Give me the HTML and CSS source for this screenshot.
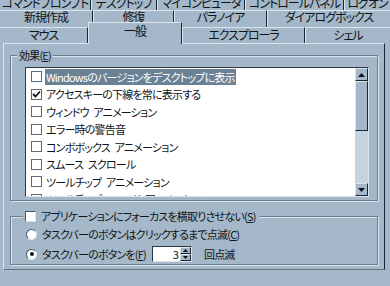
FILE: index.html
```html
<!DOCTYPE html>
<html lang="ja">
<head>
  <meta charset="UTF-8">
  <meta name="viewport" content="width=device-width, initial-scale=1.0">
  <title>Tweak UI</title>
  <link rel="stylesheet" href="styles.css">
</head>
<body>
  <div class="tabs">
    <div class="tabrow row1">
      <div class="tab w-cmd"><span>コマンドプロンプト</span></div>
      <div class="tab w-desk"><span>デスクトップ</span></div>
      <div class="tab w-mycom"><span>マイコンピュータ</span></div>
      <div class="tab w-ctrl"><span>コントロールパネル</span></div>
      <div class="tab fill"><span>ログオン</span></div>
    </div>
    <div class="tabrow row2">
      <div class="tab w-new">新規作成</div>
      <div class="tab w-repair">修復</div>
      <div class="tab w-para">パラノイア</div>
      <div class="tab fill">ダイアログボックス</div>
    </div>
    <div class="tabrow row3">
      <div class="tab w-mouse">マウス</div>
      <div class="tab w-general active">一般</div>
      <div class="tab w-explorer">エクスプローラ</div>
      <div class="tab fill">シェル</div>
    </div>
  </div>

  <div class="panel">
    <fieldset class="group effects">
      <legend>効果(<u>E</u>)</legend>
      <div class="listbox">
        <ul class="items">
          <li><span class="check"></span><span class="label selected">Windowsのバージョンをデスクトップに表示</span></li>
          <li><span class="check"><svg width="9" height="9" viewBox="0 0 9 9"><path d="M1 4 L3.5 6.5 L8 1.5" fill="none" stroke="#101418" stroke-width="1.8"/></svg></span><span class="label">アクセスキーの下線を常に表示する</span></li>
          <li><span class="check"></span><span class="label">ウィンドウ アニメーション</span></li>
          <li><span class="check"></span><span class="label">エラー時の警告音</span></li>
          <li><span class="check"></span><span class="label">コンボボックス アニメーション</span></li>
          <li><span class="check"></span><span class="label">スムース スクロール</span></li>
          <li><span class="check"></span><span class="label">ツールチップ アニメーション</span></li>
          <li><span class="check"></span><span class="label">ツールチップ フェード アニメーション</span></li>
        </ul>
        <div class="scrollbar">
          <div class="sb-btn"><svg width="7" height="4" viewBox="0 0 7 4"><path d="M3.5 0 L7 4 L0 4 Z" fill="#101418"/></svg></div>
          <div class="sb-thumb"></div>
          <div class="sb-track"></div>
          <div class="sb-btn"><svg width="7" height="4" viewBox="0 0 7 4"><path d="M0 0 L7 0 L3.5 4 Z" fill="#101418"/></svg></div>
        </div>
      </div>
    </fieldset>

    <fieldset class="group taskbar">
      <legend><span class="box"></span>アプリケーションにフォーカスを横取りさせない(<u>S</u>)</legend>
      <div class="option">
        <span class="radio"></span>
        <span>タスクバーのボタンはクリックするまで点滅(<u>C</u>)</span>
      </div>
      <div class="option">
        <span class="radio on"></span>
        <span>タスクバーのボタンを(<u>F</u>)</span>
        <div class="spin">
          <div class="spin-field">3</div>
          <div class="spin-btns">
            <div class="spin-btn"><svg width="5" height="3" viewBox="0 0 5 3"><path d="M2.5 0 L5 3 L0 3 Z" fill="#101418"/></svg></div>
            <div class="spin-btn"><svg width="5" height="3" viewBox="0 0 5 3"><path d="M0 0 L5 0 L2.5 3 Z" fill="#101418"/></svg></div>
          </div>
        </div>
        <span class="after">回点滅</span>
      </div>
    </fieldset>
  </div>
</body>
</html>
```

FILE: styles.css
```css
body {
  margin: 0;
  background: #a4b8c9;
  color: #101418;
  font-family: "Noto Sans CJK JP", "Liberation Sans", sans-serif;
  font-size: 11px;
  letter-spacing: -0.8px;
  word-spacing: 3px;
  font-feature-settings: "palt";
  overflow: hidden;
}

u {
  text-decoration-thickness: 1px;
  text-underline-offset: 1px;
}

/* tab rows */
.tabrow {
  display: flex;
  white-space: nowrap;
}

.tab {
  box-sizing: border-box;
  border-top: 1px solid #dae5ee;
  border-left: 1px solid #dae5ee;
  border-right: 1px solid #1c2630;
  text-align: center;
  line-height: 12px;
  font-size: 12px;
  letter-spacing: -1px;
  overflow: hidden;
}

.tab.fill {
  flex: 1;
  border-right: none;
}

.row1 {
  height: 10px;
  overflow: hidden;
}

.row1 .tab {
  display: flex;
  align-items: flex-end;
  justify-content: center;
  border-top: none;
  height: 10px;
  padding-bottom: 1px;
}

.row1 .tab span {
  line-height: 13px;
  flex: none;
}

.row2 .tab {
  height: 17px;
  padding-top: 0;
}

.row3 {
  height: 16px;
}

.row3 .tab {
  height: 16px;
  padding-top: 1px;
}

.row3 .tab.active {
  position: relative;
  z-index: 1;
  height: 22px;
  margin-top: -5px;
  padding-top: 2px;
  background: #a4b8c9;
}

.w-cmd { width: 91px; border-left: none; }
.w-desk { width: 66px; }
.w-mycom { width: 88px; }
.w-ctrl { width: 99px; }
.w-new { width: 93px; border-left: none; }
.w-repair { width: 81px; }
.w-para { width: 93px; }
.w-mouse { width: 88px; border-left: none; }
.w-general { width: 94px; }
.w-explorer { width: 123px; }

/* page panel */
.panel {
  box-sizing: border-box;
  width: 382px;
  height: 227px;
  margin-left: 3px;
  padding: 0 6px;
  border-top: 1px solid #dae5ee;
  border-left: 1px solid #dae5ee;
  border-right: 1px solid #1c2630;
  border-bottom: 1px solid #5e7282;
}

.group {
  margin: 0;
  border: 1px solid #6a7e8e;
  box-shadow: inset 1px 1px 0 #dae5ee, 1px 1px 0 #dae5ee;
  min-inline-size: 0;
}

.group legend {
  background: #a4b8c9;
  line-height: 14px;
  padding: 0 2px;
}

.effects {
  width: 368px;
  box-sizing: border-box;
  margin-top: 4px;
  padding: 5px 8px 3px 6px;
}

.listbox {
  display: flex;
  height: 128px;
  margin-left: 8px;
  background: #ffffff;
  border-top: 1px solid #2a3640;
  border-left: 1px solid #2a3640;
  border-right: 1px solid #dae5ee;
  border-bottom: 1px solid #dae5ee;
  overflow: hidden;
}

.items {
  flex: 1;
  list-style: none;
  margin: 0;
  padding: 0;
  overflow: hidden;
}

.items li {
  display: flex;
  align-items: center;
  height: 17.5px;
  padding-left: 5px;
  white-space: nowrap;
}

.check {
  box-sizing: border-box;
  width: 11px;
  height: 11px;
  margin-right: 3px;
  border: 1px solid #5a6a78;
  background: #ffffff;
  display: flex;
  align-items: center;
  justify-content: center;
}

.label {
  line-height: 16px;
  padding: 0 1px;
}

.label.selected {
  background: #6b8296;
  color: #ffffff;
}

.scrollbar {
  display: flex;
  flex-direction: column;
  width: 13px;
  background: #c6d4df;
}

.sb-btn,
.sb-thumb {
  box-sizing: border-box;
  background: #a4b8c9;
  border-top: 1px solid #dae5ee;
  border-left: 1px solid #dae5ee;
  border-right: 1px solid #1c2630;
  border-bottom: 1px solid #1c2630;
}

.sb-btn {
  height: 13px;
  display: flex;
  align-items: center;
  justify-content: center;
}

.sb-thumb {
  height: 50px;
}

.sb-track {
  flex: 1;
}

/* lower group */
.taskbar {
  width: 368px;
  box-sizing: border-box;
  margin-top: 8px;
  height: 56px;
  padding: 1px 8px 0 15px;
}

.taskbar legend {
  display: flex;
  align-items: center;
  margin-left: -3px;
  padding: 0 3px 0 2px;
}

.box {
  box-sizing: border-box;
  width: 11px;
  height: 11px;
  margin-right: 5px;
  background: #ffffff;
  border-top: 1px solid #4a5a68;
  border-left: 1px solid #4a5a68;
  border-right: 1px solid #dae5ee;
  border-bottom: 1px solid #dae5ee;
}

.option {
  display: flex;
  align-items: center;
  height: 20px;
  white-space: nowrap;
}

.radio {
  box-sizing: border-box;
  width: 11px;
  height: 11px;
  margin-right: 5px;
  border-radius: 50%;
  background: #ffffff;
  border: 1px solid;
  border-color: #4a5a68 #dae5ee #dae5ee #4a5a68;
  display: flex;
  align-items: center;
  justify-content: center;
}

.radio.on::after {
  content: "";
  width: 4px;
  height: 4px;
  border-radius: 50%;
  background: #101418;
}

.spin {
  display: flex;
  height: 14px;
  margin-left: 6px;
  border-top: 1px solid #2a3640;
  border-left: 1px solid #2a3640;
  border-right: 1px solid #dae5ee;
  border-bottom: 1px solid #dae5ee;
}

.spin-field {
  width: 25px;
  background: #ffffff;
  text-align: right;
  line-height: 14px;
  padding-right: 2px;
}

.spin-btns {
  display: flex;
  flex-direction: column;
  width: 11px;
}

.spin-btn {
  flex: 1;
  box-sizing: border-box;
  background: #a4b8c9;
  border-top: 1px solid #dae5ee;
  border-left: 1px solid #dae5ee;
  border-right: 1px solid #1c2630;
  border-bottom: 1px solid #1c2630;
  display: flex;
  align-items: center;
  justify-content: center;
}

.after {
  margin-left: 12px;
}
```
